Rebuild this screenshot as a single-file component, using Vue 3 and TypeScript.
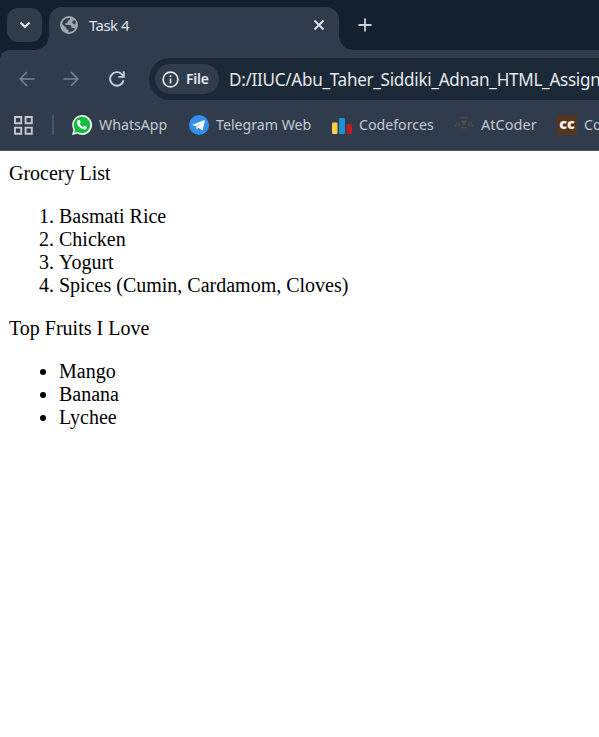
<script setup lang="ts">
interface Bookmark {
  id: string
  label: string
}

const bookmarks: Bookmark[] = [
  { id: 'whatsapp', label: 'WhatsApp' },
  { id: 'telegram', label: 'Telegram Web' },
  { id: 'codeforces', label: 'Codeforces' },
  { id: 'atcoder', label: 'AtCoder' },
  { id: 'codechef', label: 'Co' },
]

const groceries: string[] = ['Basmati Rice', 'Chicken', 'Yogurt', 'Spices (Cumin, Cardamom, Cloves)']
const fruits: string[] = ['Mango', 'Banana', 'Lychee']
</script>

<template>
  <div class="browser">
    <header class="tabstrip">
      <button class="tab-search" aria-label="Search tabs">
        <svg width="12" height="8" viewBox="0 0 12 8"><path d="M1.5 1.5 6 6l4.500-4.500" fill="none" stroke="#e3e7ee" stroke-width="2.200" /></svg>
      </button>
      <div class="tab">
        <svg class="globe" width="18" height="18" viewBox="0 0 18 18">
          <circle cx="9" cy="9" r="8" fill="#303b4b" stroke="#a0a6ad" stroke-width="1.900" />
          <path d="M1.500 7.500 6.500 12v1.500l2 .5v3C4 17 1 13 1.500 7.500zM10 1v2.500L7.500 5v2H5.500v2h5l1 1.500v1.500h2.500l1 1c2-3 2-8-1-10.500C13 1.500 11.500 1 10 1z" fill="#a0a6ad" />
          <path d="M12.500 4.500h3v4l-2-.5-1-1.500z" fill="#303b4b" />
        </svg>
        <span class="tab-title">Task 4</span>
        <svg class="close" width="12" height="12" viewBox="0 0 12 12"><path d="m1.500 1.500 9 9m0-9-9 9" fill="none" stroke="#e0e4ea" stroke-width="1.800" /></svg>
      </div>
      <svg class="plus" width="14" height="14" viewBox="0 0 14 14"><path d="M7 .5v13M.5 7h13" fill="none" stroke="#c4d0e4" stroke-width="1.800" /></svg>
    </header>

    <nav class="toolbar">
      <svg class="back" width="16" height="16" viewBox="0 0 16 16"><path d="M15.500 8H1.500M8 1 1.200 8 8 15" fill="none" stroke="#778290" stroke-width="1.700" /></svg>
      <svg class="forward" width="16" height="16" viewBox="0 0 16 16"><path d="M.5 8h14M8 1l6.800 7L8 15" fill="none" stroke="#778290" stroke-width="1.700" /></svg>
      <svg class="reload" width="16" height="16" viewBox="0 0 16 16">
        <path d="M14.600 9.300A6.800 6.800 0 1 1 12.800 3.200L14 4.500" fill="none" stroke="#c1cee2" stroke-width="1.900" />
        <path d="M15.800.3v6.500H9.300V5h4.600V.3z" fill="#c1cee2" />
      </svg>
      <div class="omnibox">
        <div class="chip">
          <svg width="17" height="17" viewBox="0 0 17 17">
            <circle cx="8.500" cy="8.500" r="7.400" fill="none" stroke="#e4e8ee" stroke-width="1.700" />
            <path d="M8.500 7.500v5M8.500 4.300v1.800" stroke="#e4e8ee" stroke-width="1.700" />
          </svg>
          <span>File</span>
        </div>
        <span class="url">D:/IIUC/Abu_Taher_Siddiki_Adnan_HTML_Assign</span>
      </div>
    </nav>

    <div class="bookmarks">
      <svg class="apps" width="19" height="19" viewBox="0 0 19 19">
        <path d="M1 1h6.200v6.200H1zM11.600 1h6.200v6.200h-6.200zM1 11.600h6.200v6.200H1zM11.600 11.600h6.200v6.200h-6.200z" fill="none" stroke="#c5c8cc" stroke-width="1.900" />
      </svg>
      <i class="divider"></i>
      <div v-for="b in bookmarks" :key="b.id" class="bookmark" :class="b.id">
        <svg width="20" height="20" viewBox="0 0 20 20">
          <template v-if="b.id === 'whatsapp'">
            <path d="M0 20l1.500-5.200A9.900 9.900 0 1 1 5.300 18.600z" fill="#fff" />
            <path d="M2 18l1-3.500A8.300 8.300 0 1 1 5.600 17z" fill="#10bf3c" />
            <path d="M6.700 5c.7-.3 1 0 1.200.5l.7 1.600c.2.600-.6 1.200-.8 1.600.8 1.600 2 2.600 3.500 3.200.5-.5.9-1.300 1.400-1.100l2 1c.7.400-.2 2-1.200 2.500-1.400.6-3.700-.2-5.500-1.700C5.800 10.700 4.600 8.800 4.900 7c.1-.8.8-1.700 1.800-2z" fill="#fff" />
          </template>
          <template v-else-if="b.id === 'telegram'">
            <circle cx="10" cy="10" r="10" fill="#338fea" />
            <path d="M3.500 9.700 15 5.200c.6-.2.9.1.800.7l-2 8.600c-.1.600-.6.700-1.100.4l-3-2.200-1.500 1.400c-.4.300-.6.200-.7-.3l-.7-2.700-3.200-.9c-.5-.2-.5-.4-.1-.5z" fill="#fff" />
            <path d="M7.500 11.200 12.600 7.700 8.600 11.800 8 13z" fill="#75b4ef" />
          </template>
          <template v-else-if="b.id === 'codeforces'">
            <rect x="0" y="7.500" width="5.500" height="11.500" rx="1" fill="#f8ce4a" />
            <rect x="7" y="3" width="6" height="16" rx="1" fill="#1d91d0" />
            <rect x="14.500" y="9" width="5.500" height="10" rx="1" fill="#b91d27" />
          </template>
          <template v-else-if="b.id === 'atcoder'">
            <path d="m5 4 2-1.500 1.500 1h3l1.500-1L15.500 4l.5 4 3 4-2 1-3-2-2 2H8l-2-2-3 2-2-1 3-4z" fill="#363b43" />
            <path d="M5.500 3.500 7.500 2.500h5l2 1M3.500 7 1 12m3-1 2-3m10.500-1 2.500 5m-3-1-2-3M7 6.500h2m2 0h2M8 9.500l2-1 2 1M7 12.500h6" fill="none" stroke="#484c53" stroke-width="1.300" />
            <path d="M4 17h2m2 0h4m2 0h2" stroke="#3c434e" stroke-width="1" />
            <circle cx="10" cy="6.800" r="2" fill="#484c53" />
          </template>
          <template v-else>
            <rect width="20" height="20" fill="#533520" />
            <text class="cc" x="10" y="14" text-anchor="middle" textLength="15.500" lengthAdjust="spacingAndGlyphs">cc</text>
          </template>
        </svg>
        <span class="label">{{ b.label }}</span>
      </div>
    </div>

    <main class="page">
      <div>Grocery List</div>
      <ol>
        <li v-for="item in groceries" :key="item">{{ item }}</li>
      </ol>
      <div>Top Fruits I Love</div>
      <ul>
        <li v-for="item in fruits" :key="item">{{ item }}</li>
      </ul>
    </main>
  </div>
</template>

<style>
body {
  background: #fff;
  overflow: hidden;
}
</style>

<style scoped>
.browser {
  width: 599px;
  height: 737px;
  overflow: hidden;
  background: #fff;
  font-family: "Noto Sans", "Open Sans", sans-serif;
}
svg {
  display: block;
  flex: none;
}
.tabstrip {
  display: flex;
  height: 50px;
  background: #15202e;
}
.tab-search {
  box-sizing: border-box;
  width: 35px;
  height: 34px;
  margin: 8px 7px 0;
  padding: 0;
  border: 0;
  border-radius: 11px;
  background: #303b4b;
  display: flex;
  align-items: center;
  justify-content: center;
}
.tab {
  position: relative;
  display: flex;
  align-items: center;
  box-sizing: border-box;
  width: 290px;
  height: 43px;
  margin-top: 7px;
  padding: 0 14px 7px 11px;
  border-radius: 13px 13px 0 0;
  background: #303b4b;
}
.tab::before,
.tab::after {
  content: "";
  position: absolute;
  bottom: 0;
  width: 14px;
  height: 14px;
}
.tab::before {
  right: 100%;
  background: radial-gradient(circle at 0 0, transparent 13.500px, #303b4b 14px);
}
.tab::after {
  left: 100%;
  background: radial-gradient(circle at 100% 0, transparent 13.500px, #303b4b 14px);
}
.tab-title {
  margin-left: 11px;
  font-size: 15px;
  line-height: 20px;
  color: #dde2ea;
  letter-spacing: -0.550px;
  white-space: nowrap;
}
.close {
  margin-left: auto;
}
.plus {
  margin: 18px 0 0 19px;
}
.toolbar {
  display: flex;
  align-items: center;
  height: 50px;
  background: radial-gradient(circle at 9px 9px, #303b4b 8.500px, #15202e 9px) 0 0 / 9px 9px no-repeat, #303b4b;
}
.toolbar > svg {
  margin-top: 8px;
}
.back {
  margin-left: 19px;
}
.forward {
  margin-left: 28px;
}
.reload {
  margin-left: 30px;
}
.omnibox {
  box-sizing: border-box;
  flex: 1;
  min-width: 0;
  height: 42px;
  margin: 8px 0 0 24px;
  padding-left: 6px;
  border-radius: 21px 0 0 21px;
  background: #1b2835;
  display: flex;
  align-items: center;
}
.chip {
  box-sizing: border-box;
  flex: none;
  display: flex;
  align-items: center;
  width: 64px;
  height: 30px;
  padding-left: 7px;
  border-radius: 15px;
  background: #303b4b;
  color: #e4e8ee;
  font-size: 14px;
  font-weight: 600;
}
.chip span {
  margin-left: 7px;
  line-height: 20px;
  letter-spacing: -0.200px;
}
.url {
  margin-left: 10px;
  color: #e3e8ef;
  font-size: 18px;
  line-height: 24px;
  letter-spacing: -0.300px;
  white-space: nowrap;
  transform: scaleX(0.949);
  transform-origin: 0 50%;
}
.bookmarks {
  display: flex;
  align-items: center;
  box-sizing: border-box;
  height: 51px;
  padding-left: 14px;
  background: #303b4b;
  border-bottom: 1px solid #475160;
}
.divider {
  flex: none;
  width: 2px;
  height: 20px;
  margin-left: 19px;
  background: #475465;
}
.bookmark {
  flex: none;
  display: flex;
  align-items: center;
}
.label {
  margin: 0 0 2px 7px;
  font-size: 15px;
  line-height: 20px;
  color: #c4cad2;
  white-space: nowrap;
  transform: scaleX(0.945);
  transform-origin: 0 50%;
}
.whatsapp {
  width: 117px;
  margin-left: 18px;
}
.telegram {
  width: 143px;
}
.codeforces {
  width: 122px;
}
.atcoder {
  width: 103px;
}
.atcoder .label {
  transform: scaleX(0.97);
}
.cc {
  font-family: "Open Sans", sans-serif;
  font-size: 14px;
  font-weight: 800;
  fill: #fff7eb;
}
.page {
  padding: 11px 9px 10px;
  font-family: "Liberation Serif", "Times New Roman", serif;
  font-size: 20px;
  line-height: 23px;
  color: #000;
}
.page ol,
.page ul {
  margin: 20px 0;
  padding-left: 50px;
}
</style>
